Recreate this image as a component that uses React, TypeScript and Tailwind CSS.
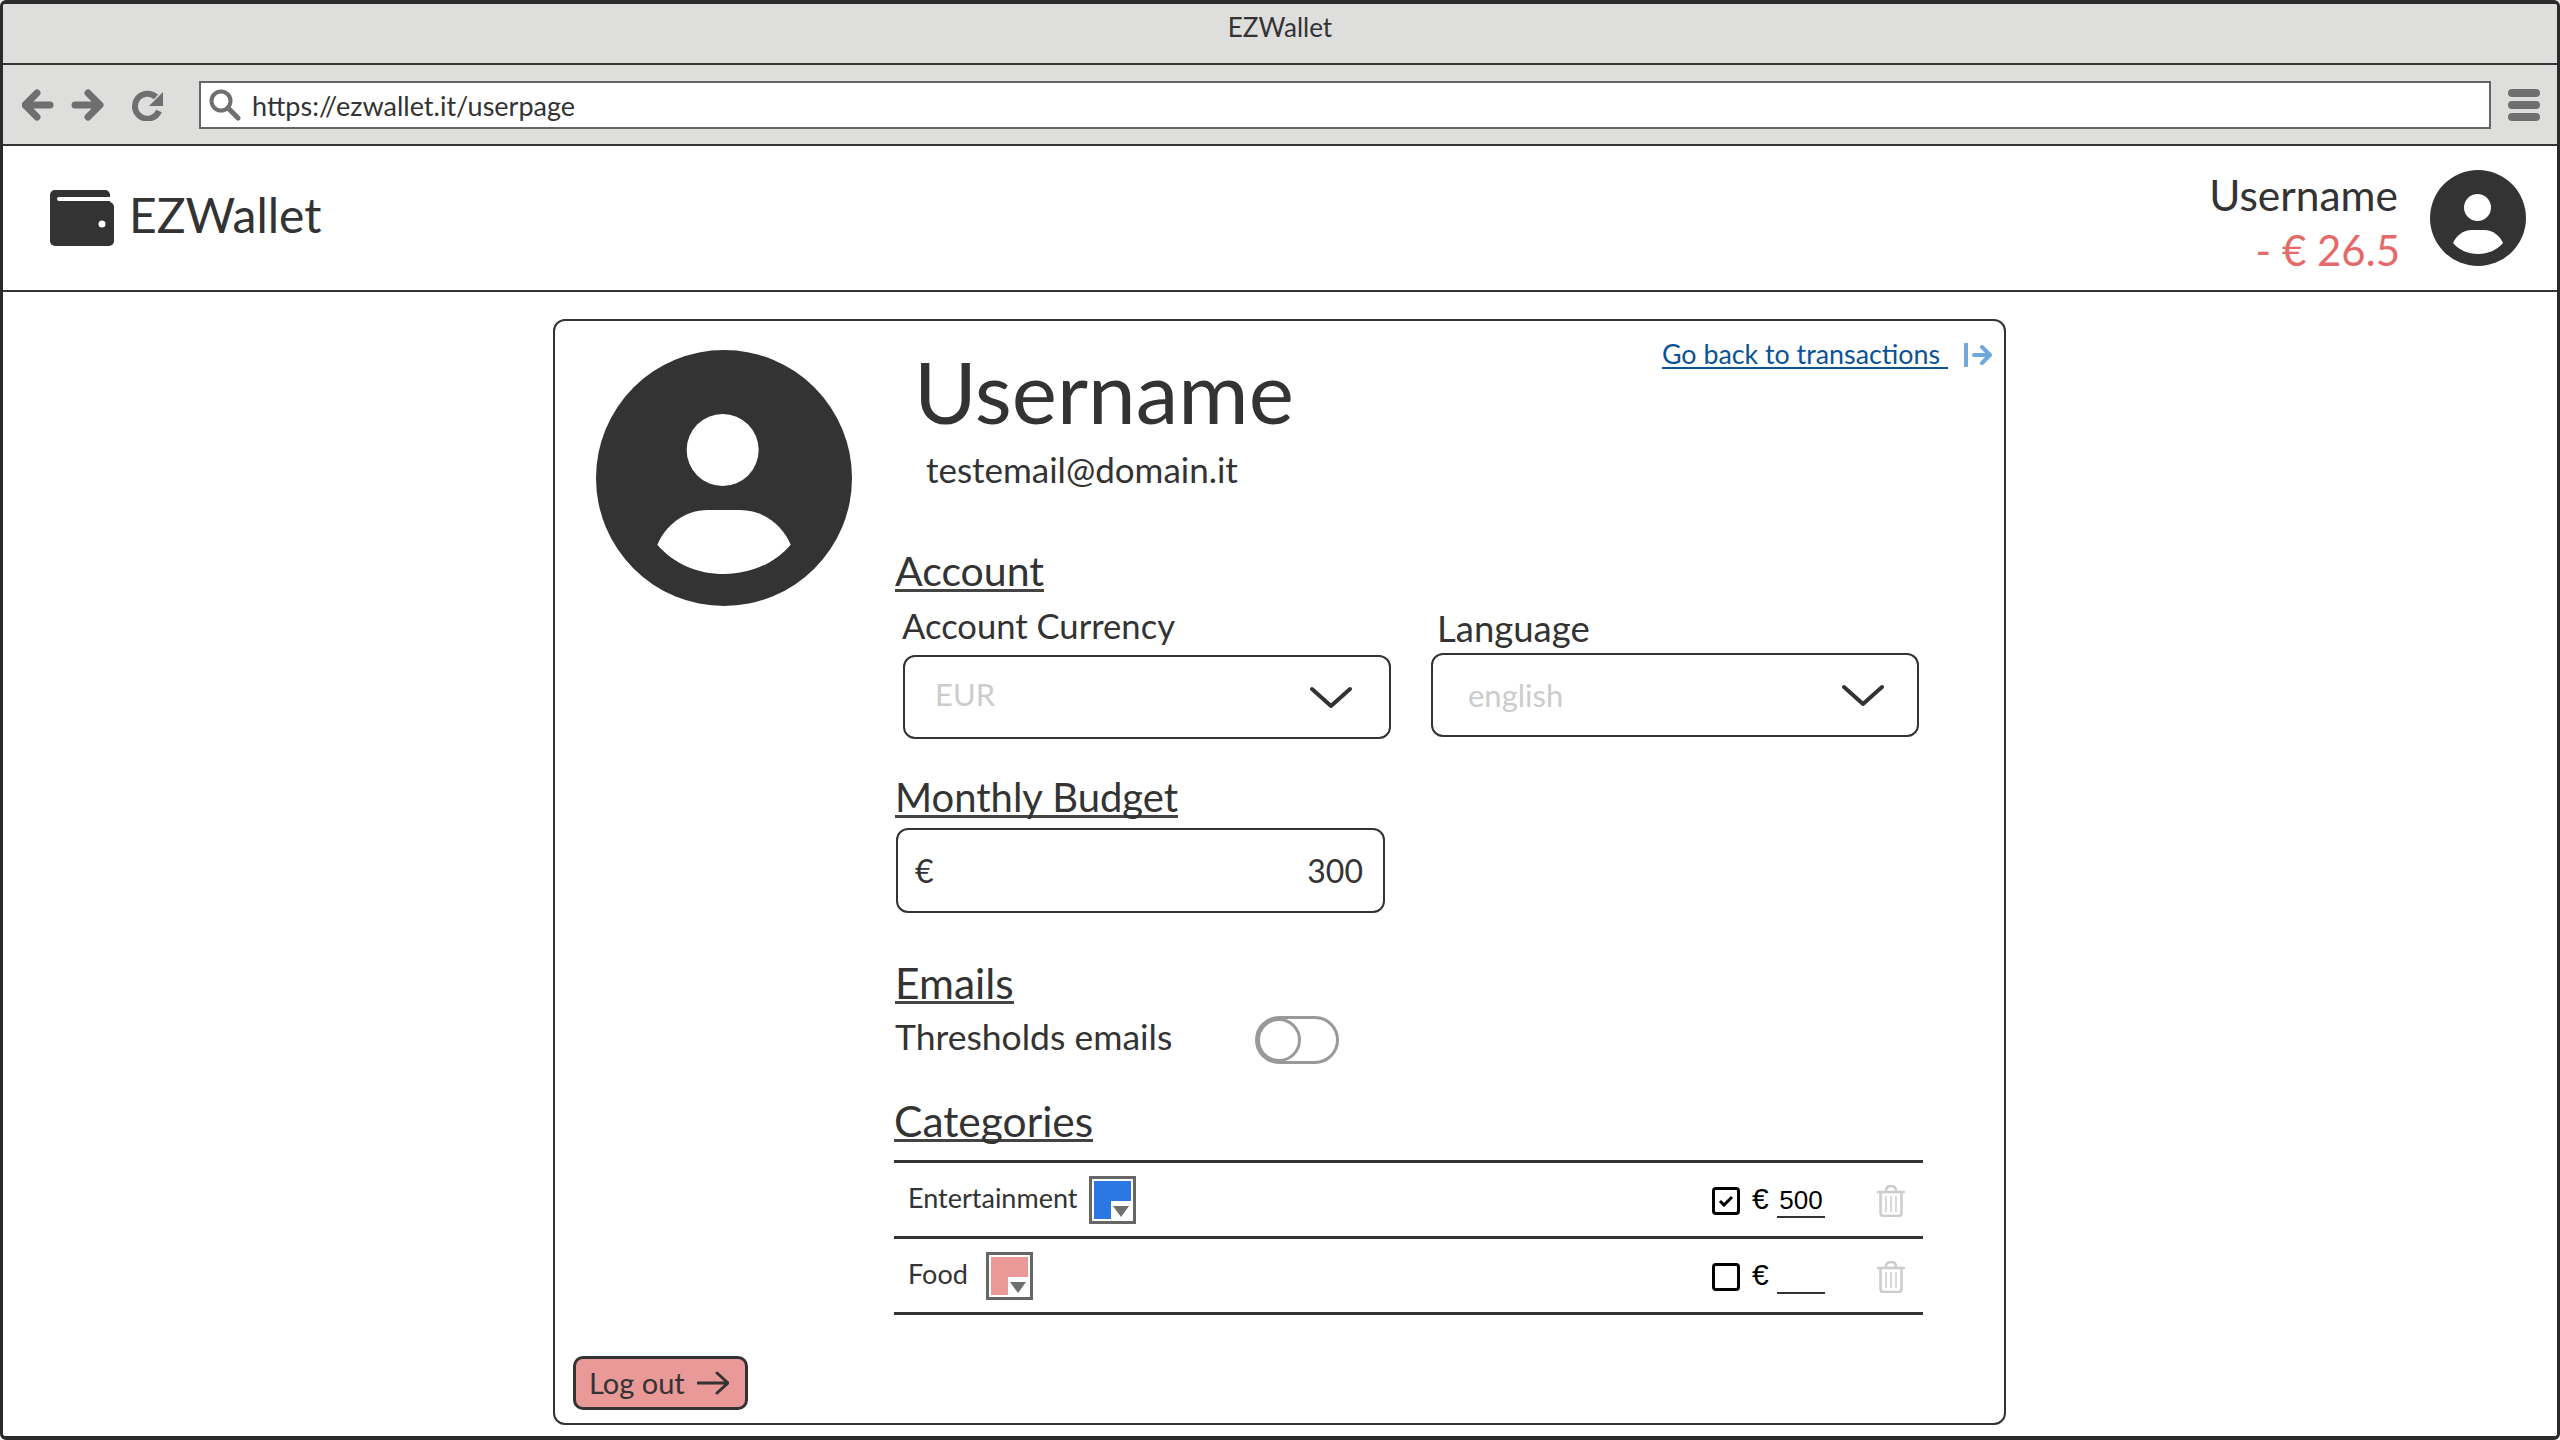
import React from 'react';

const Avatar = ({ className }: { className: string }) => (
  <svg viewBox="0 0 96 96" className={className}>
    <circle cx="48" cy="48" r="48" fill="#333333" />
    <circle cx="47.5" cy="37.5" r="13.5" fill="#ffffff" />
    <path d="M23 73C26 66 33 60 42 60H54C63 60 70 66 73 73C67 80 58 84 48 84C38 84 29 80 23 73Z" fill="#ffffff" />
  </svg>
);

const Wallet = () => (
  <svg viewBox="0 0 64 56" className="w-[64px] h-[56px] shrink-0">
    <rect x="0" y="0" width="60" height="30" rx="5" fill="#333333" />
    <rect x="0" y="12" width="64" height="44" rx="5" fill="#333333" />
    <path d="M9 9H64" stroke="#ffffff" strokeWidth="4" strokeLinecap="round" />
    <rect x="60" y="0" width="4" height="11" fill="#ffffff" />
    <circle cx="52" cy="34" r="3.5" fill="#ffffff" />
  </svg>
);

const Chevron = () => (
  <svg viewBox="0 0 42 22" className="w-[42px] h-[22px]">
    <path d="M2 3L21 20L40 3" fill="none" stroke="#333333" strokeWidth="4" strokeLinecap="round" strokeLinejoin="round" />
  </svg>
);

const Trash = () => (
  <svg viewBox="0 0 28 32" className="w-[28px] h-[32px]">
    <path d="M1 7H27M9 6C9 2 11 1 14 1S19 2 19 6" fill="none" stroke="#cccccc" strokeWidth="2.5" strokeLinecap="round" />
    <path d="M3.5 8V28C3.5 30 4.5 31 6.5 31H21.5C23.5 31 24.5 30 24.5 28V8" fill="none" stroke="#cccccc" strokeWidth="2.5" />
    <path d="M9 11V27M14 11V27M19 11V27" fill="none" stroke="#cccccc" strokeWidth="1.5" />
  </svg>
);

const Heading = ({ size, children }: { size: string; children: React.ReactNode }) => (
  <div className={`w-fit border-b-[3px] border-[#444444] leading-[36px] text-[#333333] ${size}`}>{children}</div>
);

const Swatch = ({ color }: { color: string }) => (
  <div className="relative w-[47px] h-[48px] border-[3px] border-[#666666] bg-white p-[2px]">
    <div className={`w-full h-full ${color}`} />
    <div className="absolute right-[2px] bottom-[2px] w-[20px] h-[18px] bg-white flex items-end justify-center pb-[2px]">
      <svg viewBox="0 0 16 12" className="w-[16px] h-[12px]">
        <path d="M0 1H16L8 12Z" fill="#6f6f6f" />
      </svg>
    </div>
  </div>
);

const Select = ({ value, inner, text }: { value: string; inner: string; text: string }) => (
  <div className={`w-[488px] h-[84px] border-2 border-[#333333] rounded-[12px] flex items-center justify-between ${inner}`}>
    <span className={`text-[31px] text-[#cccccc] ${text}`}>{value}</span>
    <Chevron />
  </div>
);

const CategoryRow = ({ name, gap, color, checked, amount }: { name: string; gap: string; color: string; checked: boolean; amount: string }) => (
  <div className="h-[76px] border-b-[3px] border-[#333333] flex items-center pl-[14px] pr-[18px]">
    <span className={`text-[27px] text-[#333333] pb-[3px] ${gap}`}>{name}</span>
    <Swatch color={color} />
    <div className="ml-auto flex items-center pt-[2px] font-['Liberation_Sans',sans-serif] text-black">
      <div className="w-[28px] h-[28px] border-[3px] border-black rounded-[4px] flex items-center justify-center">
        {checked && (
          <svg viewBox="0 0 16 12" className="w-[16px] h-[12px]">
            <path d="M2 6L6 10L14 2" fill="none" stroke="#000000" strokeWidth="3" />
          </svg>
        )}
      </div>
      <span className="ml-[12px] w-[25px] text-[30px] leading-[32px] pb-[4px]">€</span>
      <span className="w-[48px] h-[34px] border-b-[2px] border-[#333333] text-[26px] leading-[32px] text-center">{amount}</span>
      <div className="ml-[52px]">
        <Trash />
      </div>
    </div>
  </div>
);

export default function App() {
  return (
    <div className="w-[2560px] h-[1440px] flex flex-col bg-white border-x-[3px] border-t-4 border-b-4 border-[#2a2a2a] rounded-[6px] overflow-hidden font-['Lato',sans-serif] text-[#333333]">
      <div className="h-[61px] shrink-0 bg-[#dededc] border-b-2 border-[#333333] flex justify-center pt-[7px]">
        <span className="text-[26px] leading-[32px]">EZWallet</span>
      </div>

      <div className="h-[81px] shrink-0 bg-[#dededc] border-b-2 border-[#333333] flex items-center pl-[19px] pr-[17px]">
        <svg viewBox="0 0 144 32" className="w-[144px] h-[32px] shrink-0">
          <path d="M28 16H4M15 4L3 16L15 28" fill="none" stroke="#6f6f6f" strokeWidth="7" strokeLinecap="round" strokeLinejoin="round" />
          <path d="M53 16H77M66 4L78 16L66 28" fill="none" stroke="#6f6f6f" strokeWidth="7" strokeLinecap="round" strokeLinejoin="round" />
          <path d="M137 22A12.5 12.5 0 1 1 134 8" fill="none" stroke="#6f6f6f" strokeWidth="6" />
          <path d="M141 3V17H127Z" fill="#6f6f6f" />
        </svg>
        <div className="ml-[33px] flex-1 h-[48px] border-2 border-[#666666] bg-white flex items-center pl-[8px]">
          <svg viewBox="0 0 32 32" className="w-[32px] h-[32px] shrink-0">
            <circle cx="12" cy="12" r="9.5" fill="none" stroke="#6f6f6f" strokeWidth="4" />
            <path d="M19 19L29 29" stroke="#6f6f6f" strokeWidth="5" strokeLinecap="round" />
          </svg>
          <span className="ml-[11px] pt-[4px] text-[27px]">https://ezwallet.it/userpage</span>
        </div>
        <div className="ml-[17px] w-[32px] flex flex-col gap-[4px]">
          <div className="h-[8px] rounded-full bg-[#6f6f6f]" />
          <div className="h-[8px] rounded-full bg-[#6f6f6f]" />
          <div className="h-[8px] rounded-full bg-[#6f6f6f]" />
        </div>
      </div>

      <div className="h-[146px] shrink-0 border-b-2 border-[#333333] flex items-center pl-[47px] pr-[31px]">
        <Wallet />
        <span className="ml-[15px] mb-[6px] text-[48px] leading-none">EZWallet</span>
        <div className="ml-auto mt-[8px] flex flex-col items-end">
          <span className="text-[42.5px] leading-[54px] mr-[2px]">Username</span>
          <span className="mt-[2px] text-[42px] leading-[52px] text-[#e46a6a]">- € 26.5</span>
        </div>
        <Avatar className="ml-[30px] w-[96px] h-[96px]" />
      </div>

      <div className="flex-1 pl-[550px] pt-[27px]">
        <div className="w-[1453px] h-[1106px] border-2 border-[#333333] rounded-[12px] flex">
          <div className="w-[339px] shrink-0 flex flex-col justify-between pl-[41px] pt-[29px] pb-[13px]">
            <Avatar className="w-[256px] h-[256px]" />
            <div className="-ml-[23px] w-[175px] h-[54px] bg-[#ea9999] border-[3px] border-[#333333] rounded-[10px] flex items-center pl-[13px] gap-[12px]">
              <span className="text-[29px]">Log out</span>
              <svg viewBox="0 0 32 24" className="w-[32px] h-[24px]">
                <path d="M1 12H30M20 2L31 12L20 22" fill="none" stroke="#333333" strokeWidth="3" strokeLinecap="round" strokeLinejoin="round" />
              </svg>
            </div>
          </div>

          <div className="flex-1 pr-[12px]">
            <div className="flex justify-between">
              <div className="pt-[30px]">
                <div className="ml-[20px] text-[85.5px] leading-[80px]">Username</div>
                <div className="ml-[32px] mt-[18px] text-[35px] leading-[40px]">testemail@domain.it</div>
              </div>
              <div className="flex items-center gap-[16px] h-[28px] mt-[20px]">
                <span className="border-b-2 border-[#0b5394] text-[26.8px] leading-[26px] text-[#0b5394] pr-[8px]">Go back to transactions</span>
                <svg viewBox="0 0 28 24" className="w-[28px] h-[24px]">
                  <path d="M2 1V23" stroke="#6fa8dc" strokeWidth="4" strokeLinecap="round" />
                  <path d="M10 12H26M18 4L26 12L18 20" fill="none" stroke="#6fa8dc" strokeWidth="4" strokeLinecap="round" strokeLinejoin="round" />
                </svg>
              </div>
            </div>

            <div className="mt-[64px] ml-[1px]">
              <Heading size="text-[41px]">Account</Heading>
            </div>
            <div className="flex ml-[9px]">
              <div className="mt-[16px]">
                <div className="-ml-[1px] text-[34.6px] leading-[36px]">Account Currency</div>
                <div className="mt-[11px]"><Select value="EUR" inner="pl-[30px] pr-[37px]" text="pb-[6px]" /></div>
              </div>
              <div className="ml-[40px] mt-[18px]">
                <div className="ml-[6px] text-[36.5px] leading-[36px]">Language</div>
                <div className="mt-[7px]"><Select value="english" inner="pl-[35px] pr-[33px]" text="" /></div>
              </div>
            </div>

            <div className="mt-[40px] ml-[1px]">
              <Heading size="text-[40px]">Monthly Budget</Heading>
            </div>
            <div className="mt-[10px] ml-[2px] w-[489px] h-[85px] border-2 border-[#333333] rounded-[12px] flex items-center justify-between pl-[17px] pr-[20px] text-[32px]">
              <span>€</span>
              <span>300</span>
            </div>

            <div className="mt-[52px] ml-[1px]">
              <Heading size="text-[42.5px]">Emails</Heading>
            </div>
            <div className="mt-[12px] ml-[1px] flex items-center h-[48px]">
              <span className="w-[360px] text-[35.5px] pb-[6px]">Thresholds emails</span>
              <div className="w-[84px] h-[48px] border-[3px] border-[#999999] rounded-full flex items-center">
                <div className="w-[44px] h-[44px] border-[3px] border-[#999999] rounded-full bg-white -ml-[1px]" />
              </div>
            </div>

            <div className="mt-[39px]">
              <Heading size="text-[42.5px]">Categories</Heading>
            </div>
            <div className="mt-[18px] w-[1029px] border-t-[3px] border-[#333333]">
              <CategoryRow name="Entertainment" gap="mr-[12px]" color="bg-[#2b78e4]" checked amount="500" />
              <CategoryRow name="Food" gap="mr-[18px]" color="bg-[#ea9999]" checked={false} amount="" />
            </div>
          </div>
        </div>
      </div>
    </div>
  );
}
